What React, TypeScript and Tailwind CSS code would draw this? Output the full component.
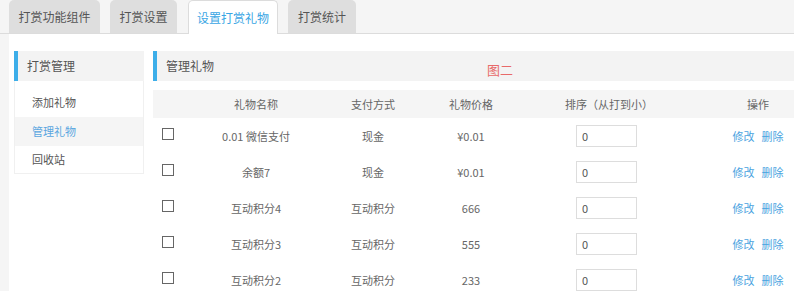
import React from "react";

const rows = [
  { name: "0.01 微信支付", pay: "现金", price: "¥0.01" },
  { name: "余额7", pay: "现金", price: "¥0.01" },
  { name: "互动积分4", pay: "互动积分", price: "666" },
  { name: "互动积分3", pay: "互动积分", price: "555" },
  { name: "互动积分2", pay: "互动积分", price: "233" },
];

const grid = "grid grid-cols-[37px_132px_102px_94px_182px_116px]";

export default function App() {
  return (
    <div
      className="w-[794px] h-[291px] overflow-hidden bg-[#f5f5f5] text-[#555]"
      style={{ fontFamily: '"Noto Sans CJK SC", "Noto Sans", sans-serif' }}
    >
      {/* tabs */}
      <div className="h-[34px] border-b border-[#dcdcdc] flex items-end pl-[9px]">
        <div className="w-[91px] h-[33px] rounded-t-[5px] bg-[#dedede] flex items-center justify-center text-[12px] text-[#555]">
          打赏功能组件
        </div>
        <div className="ml-[10px] w-[67px] h-[33px] rounded-t-[5px] bg-[#dedede] flex items-center justify-center text-[12px] text-[#555]">
          打赏设置
        </div>
        <div className="ml-[11px] w-[90px] h-[34px] -mb-px rounded-t-[5px] bg-white border border-b-0 border-[#dcdcdc] flex items-center justify-center text-[12px] text-[#3aa6e4]">
          设置打赏礼物
        </div>
        <div className="ml-[10px] w-[68px] h-[33px] rounded-t-[5px] bg-[#dedede] flex items-center justify-center text-[12px] text-[#555]">
          打赏统计
        </div>
      </div>

      {/* body */}
      <div className="ml-[9px] h-[257px] bg-white flex items-start pt-[17px] pl-[5px] overflow-hidden">
        {/* sidebar */}
        <div className="w-[130px] shrink-0">
          <div className="h-[30px] bg-[#f3f3f3] border-l-4 border-[#3daee9] flex items-center pl-[9px] text-[12px] text-[#555]">
            打赏管理
          </div>
          <div className="border-r border-b border-l border-[#f0f0f0] pt-[7px]">
            <div className="h-[29px] flex items-center pl-[17px] text-[11px] text-[#555]">添加礼物</div>
            <div className="h-[29px] flex items-center pl-[17px] text-[11px] text-[#5aa6e0] bg-[#f5f5f5]">管理礼物</div>
            <div className="h-[27px] flex items-center pl-[17px] text-[11px] text-[#555]">回收站</div>
          </div>
        </div>

        {/* main */}
        <div className="ml-[9px] w-[663px] shrink-0">
          <div className="h-[30px] bg-[#f3f3f3] border-l-4 border-[#3daee9] flex items-center pl-[9px] text-[12px] text-[#555]">
            <span>管理礼物</span>
            <span className="ml-[273px] mt-[7px] text-[13px] text-[#e86a6a]">图二</span>
          </div>

          <div className={`${grid} mt-[9px] h-[28px] bg-[#f5f5f5] items-center text-[11px] text-[#666]`}>
            <div />
            <div className="text-center">礼物名称</div>
            <div className="text-center">支付方式</div>
            <div className="text-center">礼物价格</div>
            <div className="text-center">排序（从打到小）</div>
            <div className="text-center">操作</div>
          </div>

          {rows.map((r, i) => (
            <div key={i} className={`${grid} h-[36px] items-center text-[11px] text-[#666]`}>
              <div className="pl-[9px] flex">
                <div className="w-[12px] h-[12px] border border-[#666] bg-white mb-[4px]" />
              </div>
              <div className="text-center">{r.name}</div>
              <div className="text-center">{r.pay}</div>
              <div className="text-center">{r.price}</div>
              <div className="flex justify-center pr-[5px]">
                <div className="w-[61px] h-[22px] border border-[#dddddd] flex items-center pl-[5px] text-[11px] text-[#555]">
                  0
                </div>
              </div>
              <div className="flex justify-center gap-[7px] text-[#4aa3df]">
                <span>修改</span>
                <span>删除</span>
              </div>
            </div>
          ))}
        </div>
      </div>
    </div>
  );
}
